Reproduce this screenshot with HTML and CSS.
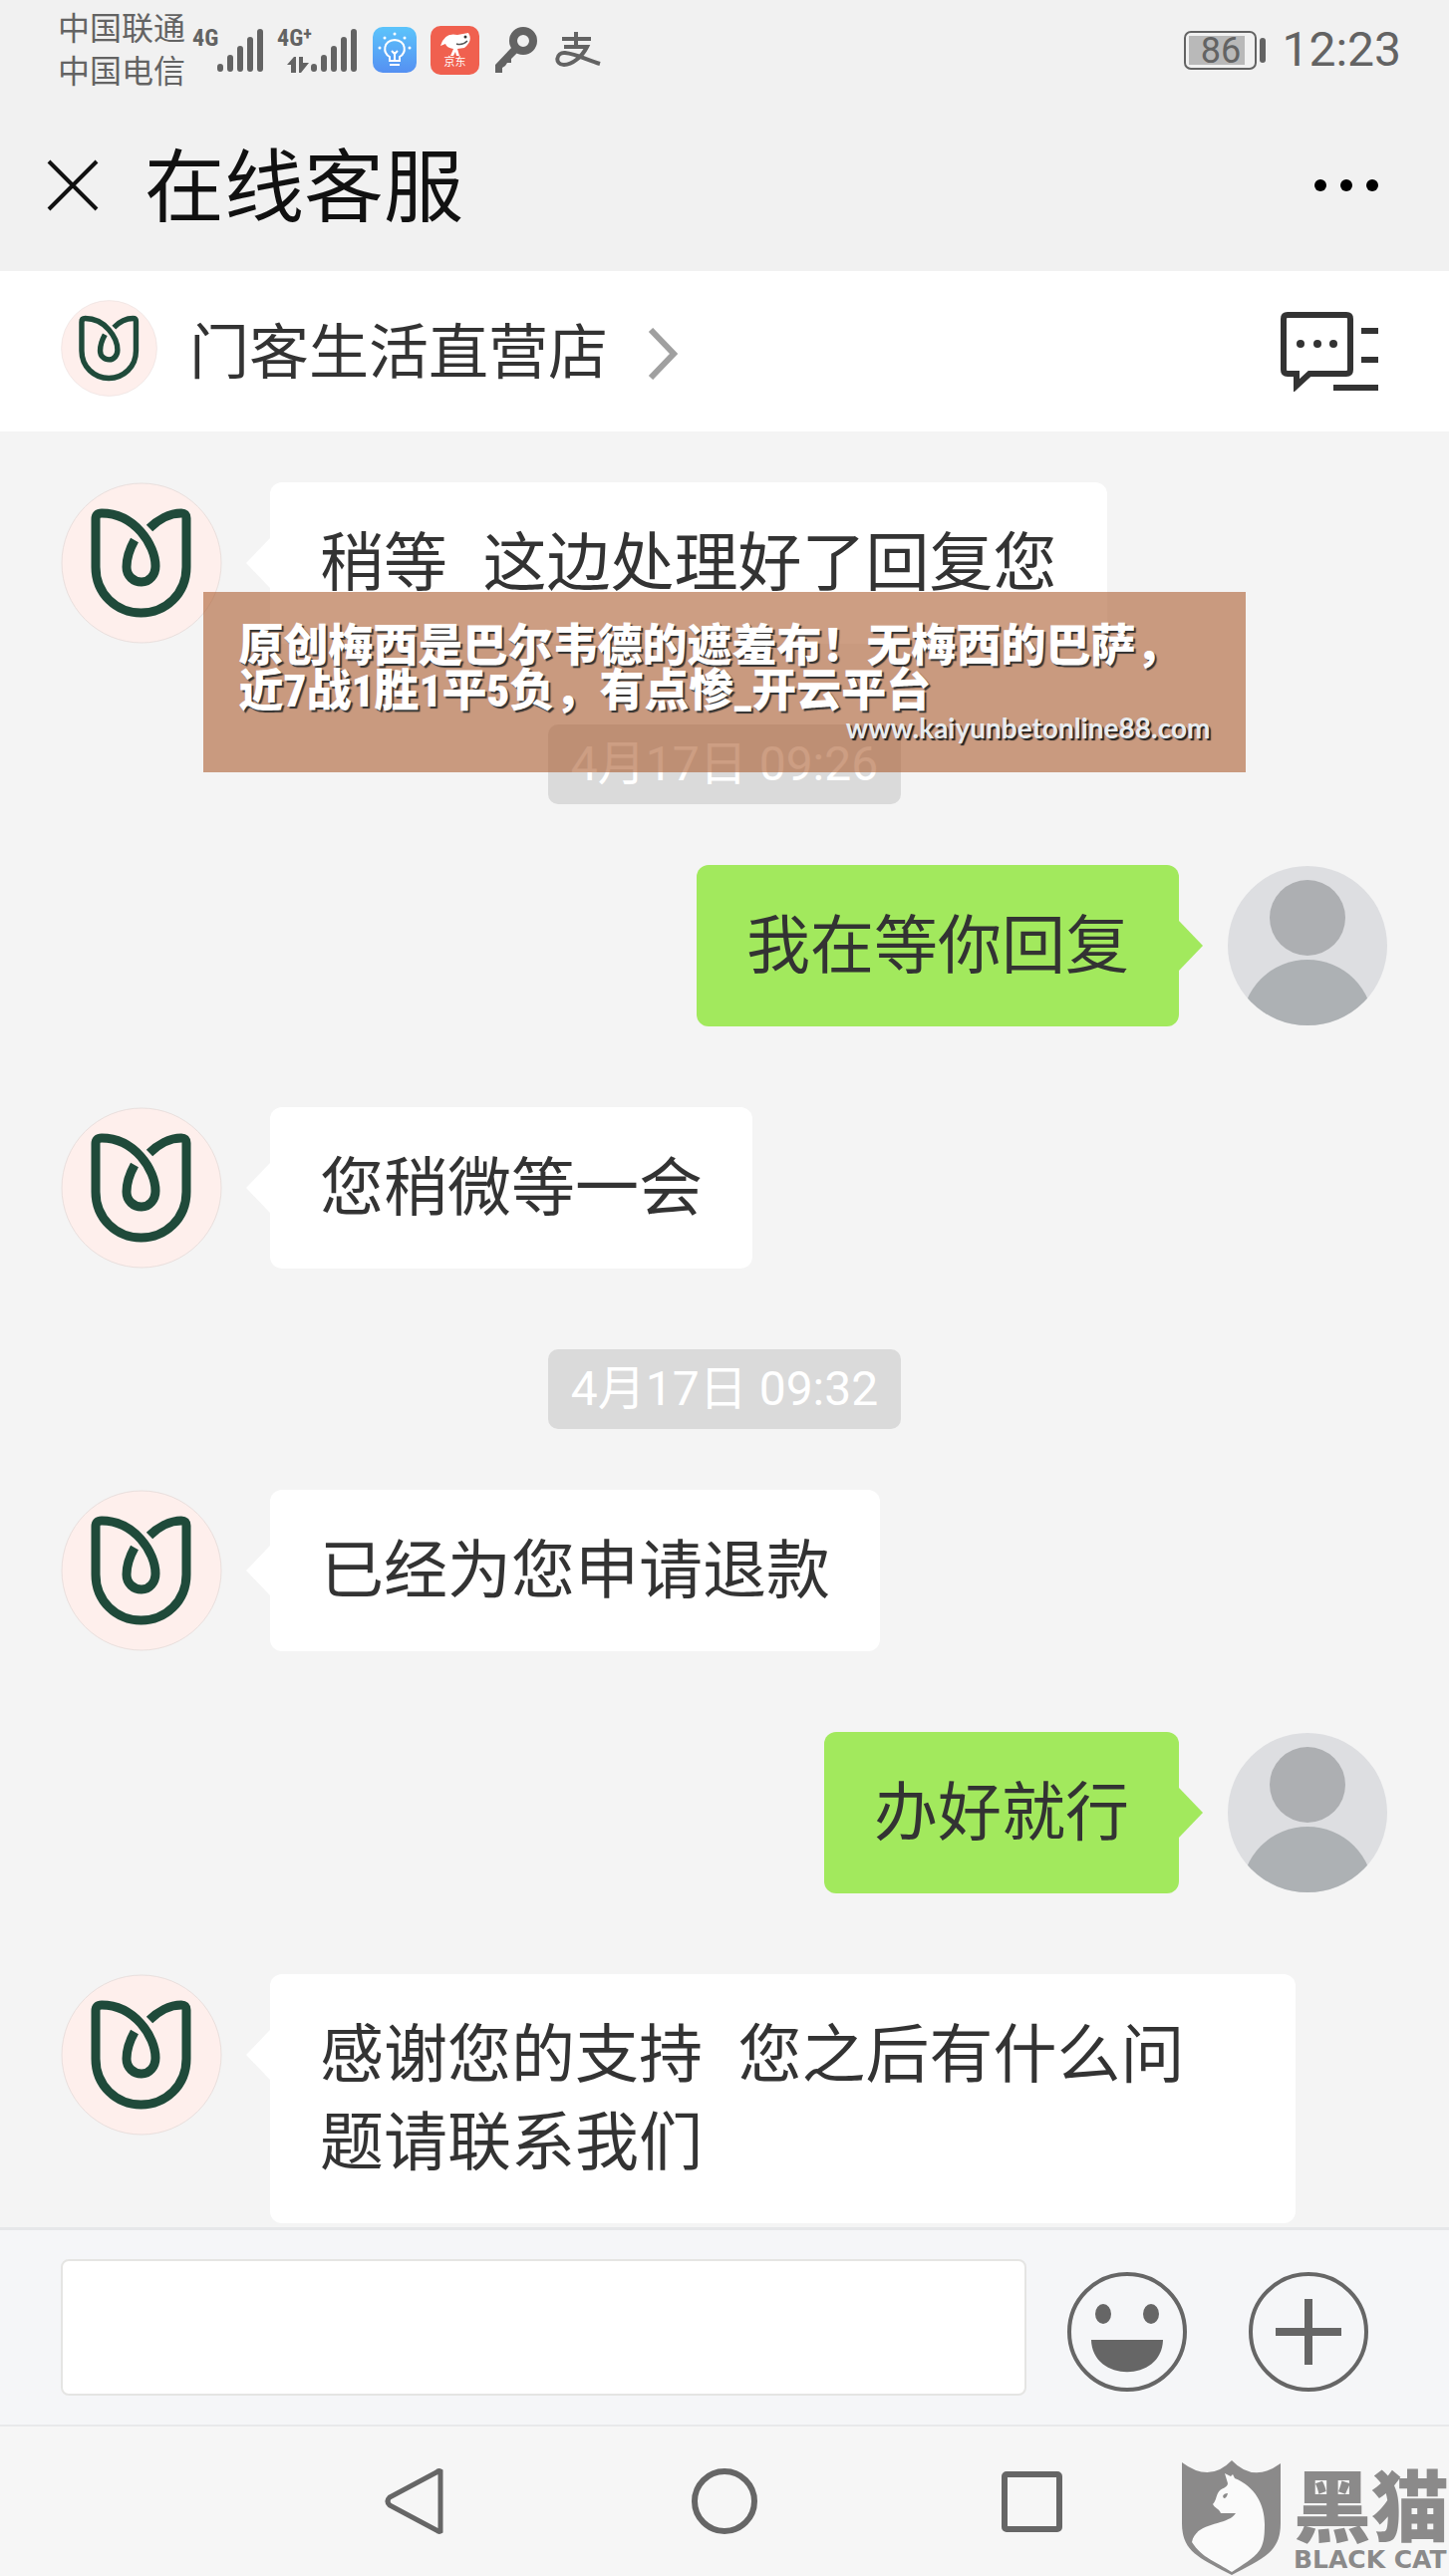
FILE: index.html
```html
<!DOCTYPE html>
<html lang="zh-CN">
<head>
  <meta charset="UTF-8">
  <meta name="viewport" content="width=device-width, initial-scale=1.0">
  <title>在线客服</title>
  <link rel="stylesheet" href="styles.css">
</head>
<body>
  <!-- shared symbols -->
  <svg class="symbols" width="0" height="0" aria-hidden="true">
    <symbol id="shop-logo" viewBox="0 0 162 162">
      <circle cx="81" cy="81" r="80" fill="#feefec" stroke="#e9dfdd" stroke-width="1"/>
      <path d="M74 58C69 67 66 77 66 85C66 94 73 100 81 100C89 100 95 93 95 84C95 63 74 31 41 31Q35 31 35 37V85C35 112 56 131 80.5 131C105 131 126 112 126 85V36Q126 31 121 31C109 31 97 38 89 46" fill="none" stroke="#1f4a3a" stroke-width="9"/>
    </symbol>
    <symbol id="user-avatar" viewBox="0 0 162 162">
      <clipPath id="round"><circle cx="81" cy="81" r="80"/></clipPath>
      <circle cx="81" cy="81" r="80" fill="#dddee1"/>
      <circle cx="81" cy="53" r="38" fill="#adafb2"/>
      <circle cx="81" cy="161" r="66" fill="#adb1b4" clip-path="url(#round)"/>
    </symbol>
    <symbol id="bars" viewBox="0 0 48 45">
      <path d="M3 39V41M13 30V41M23 21V41M33 12V41M43 4V41" stroke="#636363" stroke-width="6" stroke-linecap="round"/>
    </symbol>
  </svg>

  <div class="phone">
    <div class="status-bar">
      <div class="carriers">
        <div>中国联通</div>
        <div>中国电信</div>
      </div>
      <div class="signal">
        <span class="net">4G</span>
        <svg class="bars"><use href="#bars"/></svg>
      </div>
      <div class="signal signal-plus">
        <span class="net">4G<sup>+</sup></span>
        <svg class="arrows" viewBox="0 0 22 16"><path d="M0 8L7 0H9V16H4V8ZM12 0H16V6H22L14 16H12Z" fill="#636363"/></svg>
        <svg class="bars"><use href="#bars"/></svg>
      </div>
      <svg class="app-bulb" viewBox="0 0 44 46">
        <defs><linearGradient id="blue" x2="0" y2="1"><stop stop-color="#5cc4fb"/><stop offset="1" stop-color="#5590f2"/></linearGradient></defs>
        <rect width="44" height="46" rx="10" fill="url(#blue)"/>
        <path d="M17 34V30C10 26 10 14 22 13C34 14 34 26 27 30V34ZM17 38H27M22 33V27M19 24L22 27L25 24" fill="none" stroke="#fff" stroke-width="2"/>
        <g fill="#fff"><circle cx="22" cy="7" r="1.5"/><circle cx="12" cy="11" r="1.5"/><circle cx="32" cy="11" r="1.5"/><circle cx="7" cy="21" r="1.5"/><circle cx="37" cy="21" r="1.5"/></g>
      </svg>
      <div class="app-jd">
        <svg viewBox="0 0 32 24"><path d="M1 14Q5 0 18 3L29 1Q34 9 25 16L18 17L20 24H17L16 20L14 24H11L14 17Q7 16 6 12Z" fill="#fff"/><circle cx="26" cy="5" r="1.5" fill="#333"/><path d="M17 12Q23 14 28 9" fill="none" stroke="#555" stroke-width="1.5"/></svg>
        <span>京东</span>
      </div>
      <svg class="key" viewBox="0 0 44 46"><circle cx="29" cy="14" r="10" fill="none" stroke="#636363" stroke-width="8"/><path d="M18 20L23 26L17 32L17 36H13L11 39L8 41V46H1V38Z" fill="#636363"/></svg>
      <svg class="pay" viewBox="0 0 46 36"><path d="M7 7H36M21 0V15M9 15H32C27 25 17 33 9 33C-1 33 1 20 10 21C21 22 32 28 45 32" fill="none" stroke="#636363" stroke-width="4"/></svg>
      <div class="battery"><span>86</span></div>
      <div class="battery-cap"></div>
      <div class="clock">12:23</div>
    </div>

    <header class="title-bar">
      <button class="icon-btn close" aria-label="关闭">
        <svg viewBox="0 0 52 52"><path d="M2 2L50 50M50 2L2 50" stroke="#111" stroke-width="4"/></svg>
      </button>
      <h1>在线客服</h1>
      <button class="icon-btn more" aria-label="更多">
        <svg viewBox="0 0 64 12"><circle cx="6" cy="6" r="6"/><circle cx="32" cy="6" r="6"/><circle cx="58" cy="6" r="6"/></svg>
      </button>
    </header>

    <div class="shop-bar">
      <svg class="shop-logo"><use href="#shop-logo"/></svg>
      <a href="#" class="shop-name">门客生活直营店
        <svg viewBox="0 0 30 52"><path d="M3 2L26 26L3 50" fill="none" stroke="#a0a0a0" stroke-width="6"/></svg>
      </a>
      <button class="icon-btn records" aria-label="聊天记录">
        <svg viewBox="0 0 98 80">
          <path d="M7 3H66Q70 3 70 7V58Q70 62 66 62H29L16 74V62H7Q3 62 3 58V7Q3 3 7 3Z" fill="none" stroke="#333" stroke-width="6"/>
          <path d="M81 19H98M81 48H98M53 76H98" stroke="#333" stroke-width="6"/>
          <g fill="#333"><circle cx="20" cy="32" r="4"/><circle cx="37" cy="32" r="4"/><circle cx="53" cy="32" r="4"/></g>
        </svg>
      </button>
    </div>

    <main class="chat">
      <div class="message">
        <svg class="avatar"><use href="#shop-logo"/></svg>
        <div class="bubble">稍等  这边处理好了回复您</div>
      </div>
      <div class="time">4月17日 09:26</div>
      <div class="message mine">
        <svg class="avatar"><use href="#user-avatar"/></svg>
        <div class="bubble">我在等你回复</div>
      </div>
      <div class="message">
        <svg class="avatar"><use href="#shop-logo"/></svg>
        <div class="bubble">您稍微等一会</div>
      </div>
      <div class="time">4月17日 09:32</div>
      <div class="message">
        <svg class="avatar"><use href="#shop-logo"/></svg>
        <div class="bubble">已经为您申请退款</div>
      </div>
      <div class="message mine">
        <svg class="avatar"><use href="#user-avatar"/></svg>
        <div class="bubble">办好就行</div>
      </div>
      <div class="message">
        <svg class="avatar"><use href="#shop-logo"/></svg>
        <div class="bubble">感谢您的支持  您之后有什么问题请联系我们</div>
      </div>
    </main>

    <form class="composer">
      <input type="text" class="composer-input" aria-label="输入消息">
      <button type="button" class="icon-btn round-btn" aria-label="表情">
        <svg viewBox="0 0 122 122">
          <circle cx="61" cy="61" r="58" fill="none" stroke="#666" stroke-width="4"/>
          <g fill="#666"><ellipse cx="37" cy="43" rx="8" ry="10"/><ellipse cx="85" cy="43" rx="8" ry="10"/><path d="M25 69H97C96 112 26 112 25 69Z"/></g>
        </svg>
      </button>
      <button type="button" class="icon-btn round-btn" aria-label="更多功能">
        <svg viewBox="0 0 122 122">
          <circle cx="61" cy="61" r="58" fill="none" stroke="#666" stroke-width="4"/>
          <path d="M61 28V94M28 61H94" stroke="#666" stroke-width="8"/>
        </svg>
      </button>
    </form>

    <nav class="nav-bar">
      <button class="icon-btn" aria-label="返回"><svg viewBox="0 0 66 66"><path d="M57 3V63Q55 64 53 62L6 37Q2 33 6 29L53 4Q55 2 57 3Z" fill="none" stroke="#666" stroke-width="5"/></svg></button>
      <button class="icon-btn" aria-label="主页"><svg viewBox="0 0 66 66"><circle cx="33" cy="33" r="30" fill="none" stroke="#666" stroke-width="6"/></svg></button>
      <button class="icon-btn" aria-label="最近任务"><svg viewBox="0 0 66 66"><rect x="5" y="6" width="55" height="55" rx="2" fill="none" stroke="#666" stroke-width="6"/></svg></button>
    </nav>

    <div class="banner">
      <div class="banner-title">原创梅西是巴尔韦德的遮羞布！无梅西的巴萨，近7战1胜1平5负，有点惨_开云平台</div>
      <div class="banner-url">www.kaiyunbetonline88.com</div>
    </div>

    <div class="blackcat">
      <svg viewBox="0 0 100 116">
        <path d="M0 2Q28 23 50 0Q72 23 99 3V63C99 92 82 98 50 115C18 98 0 92 0 63Z" fill="#8b8a8a"/>
        <path d="M43 13L49 16L51 14L53 18C73 26 83 44 83 64C83 76 82 84 78 90C72 99 60 105 50 112C35 102 20 98 10 82C14 61 46 66 54 53H39C37 48 33 48 31 44C34 41 34 37 36 33C39 27 46 28 46 23Z" fill="#fafafa"/>
        <path d="M41 36Q42 33 46 33Q45 38 42 38Z" fill="#8b8a8a"/>
      </svg>
      <div class="blackcat-text">
        <div class="blackcat-cn">黑猫</div>
        <div class="blackcat-en">BLACK CAT</div>
      </div>
    </div>
  </div>
</body>
</html>
```
FILE: styles.css
```css
* {
  box-sizing: border-box;
}

body {
  font-family: Roboto, "Noto Sans CJK SC", sans-serif;
  background-color: #f4f4f4;
  color: #333;
  margin: 0;
}

svg {
  display: block;
}

.symbols {
  position: absolute;
}

.phone {
  position: relative;
  display: flex;
  flex-direction: column;
  min-height: 100vh;
}

.icon-btn {
  background: none;
  border: none;
  padding: 0;
  flex-shrink: 0;
  cursor: pointer;
}

/* status bar */
.status-bar {
  display: flex;
  align-items: center;
  height: 100px;
  padding: 0 48px 0 58px;
  background-color: #f1f1f1;
  color: #636363;
}

.carriers {
  padding-top: 2px;
  font-size: 32px;
  line-height: 43px;
  margin-right: 7px;
}

.signal {
  position: relative;
  width: 73px;
  height: 45px;
  margin-right: 12px;
}

.signal-plus {
  width: 82px;
  margin-right: 14px;
}

.net {
  position: absolute;
  top: 0;
  left: 0;
  font-family: "Roboto Condensed", Roboto, sans-serif;
  font-size: 24px;
  font-weight: bold;
  line-height: 20px;
}

.net sup {
  font-size: 18px;
  line-height: 10px;
  vertical-align: 6px;
}

.bars {
  position: absolute;
  right: 0;
  bottom: 0;
  width: 48px;
  height: 45px;
}

.arrows {
  position: absolute;
  left: 10px;
  bottom: 0;
  width: 22px;
  height: 16px;
}

.app-bulb {
  width: 44px;
  height: 46px;
  margin-right: 14px;
}

.app-jd {
  display: flex;
  flex-direction: column;
  align-items: center;
  justify-content: center;
  width: 49px;
  height: 49px;
  margin-right: 15px;
  border-radius: 10px;
  background-color: #f0604f;
  color: #fff;
  font-size: 11px;
  line-height: 13px;
}

.app-jd svg {
  width: 32px;
  height: 24px;
}

.key {
  width: 44px;
  height: 46px;
  margin-right: 17px;
}

.pay {
  width: 46px;
  height: 36px;
}

.battery {
  width: 73px;
  height: 39px;
  margin-left: auto;
  padding: 3px;
  border: 2px solid #636363;
  border-radius: 7px;
  font-size: 36px;
  line-height: 30px;
  text-align: center;
  background: linear-gradient(#b9b9b9, #b9b9b9) 3px 3px / 56px 29px no-repeat;
}

.battery-cap {
  width: 6px;
  height: 25px;
  margin: 0 16px 0 3px;
  border-radius: 3px;
  background-color: #636363;
}

.clock {
  font-size: 48px;
  line-height: 48px;
}

/* title */
.title-bar {
  display: flex;
  align-items: center;
  height: 172px;
  padding: 0 71px 0 47px;
  background-color: #f1f1f1;
}

.close svg {
  width: 52px;
  height: 52px;
}

.title-bar h1 {
  margin: 0 auto 0 46px;
  padding-top: 6px;
  color: #111;
  font-size: 80px;
  font-weight: 400;
  line-height: 100px;
}

.more svg {
  width: 64px;
  height: 12px;
}

/* shop */
.shop-bar {
  display: flex;
  align-items: center;
  height: 161px;
  padding: 0 71px 0 61px;
  background-color: #fff;
}

.shop-logo {
  width: 97px;
  height: 97px;
  margin-bottom: 6px;
}

.shop-name {
  display: flex;
  align-items: center;
  gap: 40px;
  margin: 0 auto 0 32px;
  padding-top: 4px;
  color: #333;
  font-size: 60px;
  line-height: 80px;
  text-decoration: none;
}

.shop-name svg {
  width: 30px;
  height: 52px;
}

.records svg {
  width: 98px;
  height: 80px;
}

/* chat */
.chat {
  flex: 1;
  padding: 51px 61px 4px;
}

.message {
  display: flex;
  align-items: flex-start;
  gap: 48px;
  margin-bottom: 81px;
}

.message:last-child {
  margin-bottom: 0;
}

.mine {
  flex-direction: row-reverse;
}

.avatar {
  width: 162px;
  height: 162px;
  flex-shrink: 0;
}

.bubble {
  position: relative;
  margin-right: 93px;
  padding: 37px 50px;
  border-radius: 12px;
  background-color: #fff;
  font-family: "Liberation Sans", "Noto Sans CJK SC", sans-serif;
  font-size: 64px;
  line-height: 88px;
  white-space: pre-wrap;
}

.bubble::before {
  content: "";
  position: absolute;
  top: 56px;
  right: 100%;
  border: 25px solid transparent;
  border-left-width: 0;
  border-right: 24px solid #fff;
}

.mine .bubble {
  margin: 0 0 0 93px;
  background-color: #a2e95d;
}

.mine .bubble::before {
  right: auto;
  left: 100%;
  border-left: 24px solid #a2e95d;
  border-right-width: 0;
}

.time {
  width: fit-content;
  margin: 0 auto 61px;
  padding: 0 23px;
  border-radius: 10px;
  background-color: #dadada;
  color: #fff;
  font-size: 48px;
  line-height: 80px;
}

/* composer */
.composer {
  display: flex;
  align-items: center;
  height: 200px;
  padding-left: 61px;
  padding-right: 80px;
  border-top: 3px solid #e6e7e9;
  border-bottom: 2px solid #e8e9eb;
  background-color: #f5f6f8;
}

.composer-input {
  flex: 1;
  min-width: 0;
  height: 137px;
  margin-right: 40px;
  padding: 0 30px;
  border: 2px solid #e5e5e3;
  border-radius: 8px;
  background-color: #fff;
  font-size: 64px;
}

.round-btn {
  margin-top: 8px;
}

.round-btn + .round-btn {
  margin-left: 60px;
}

.round-btn svg {
  width: 122px;
  height: 122px;
}

/* system navigation */
.nav-bar {
  display: flex;
  align-items: center;
  justify-content: center;
  gap: 243px;
  height: 150px;
  background-color: #f6f6f6;
}

.nav-bar svg {
  width: 66px;
  height: 66px;
}

/* banner over the chat */
.banner {
  position: absolute;
  top: 594px;
  left: 14%;
  right: 14%;
  height: 181px;
  padding: 32px 36px;
  background-color: rgba(172, 94, 49, 0.6);
  color: #fff;
}

.banner-title {
  font-family: "Roboto Condensed", "Liberation Sans", "Noto Sans CJK SC", sans-serif;
  font-size: 45px;
  font-weight: 900;
  line-height: 45px;
  text-shadow: 2px 2px 1px #333;
}

.banner-url {
  color: #e8ecef;
  font-family: Lato, sans-serif;
  font-size: 28px;
  font-weight: bold;
  line-height: 28px;
  text-align: right;
  text-shadow: 2px 2px 1px #222;
}

.blackcat {
  position: absolute;
  right: 0;
  bottom: 0;
  display: flex;
  gap: 12px;
  color: #8b8a8a;
}

.blackcat svg {
  width: 100px;
  height: 116px;
}

.blackcat-cn {
  font-family: "Noto Sans CJK SC", sans-serif;
  font-size: 78px;
  font-weight: 900;
  line-height: 84px;
}

.blackcat-en {
  font-family: "DejaVu Sans", sans-serif;
  font-size: 25px;
  font-weight: bold;
  line-height: 32px;
}
```
